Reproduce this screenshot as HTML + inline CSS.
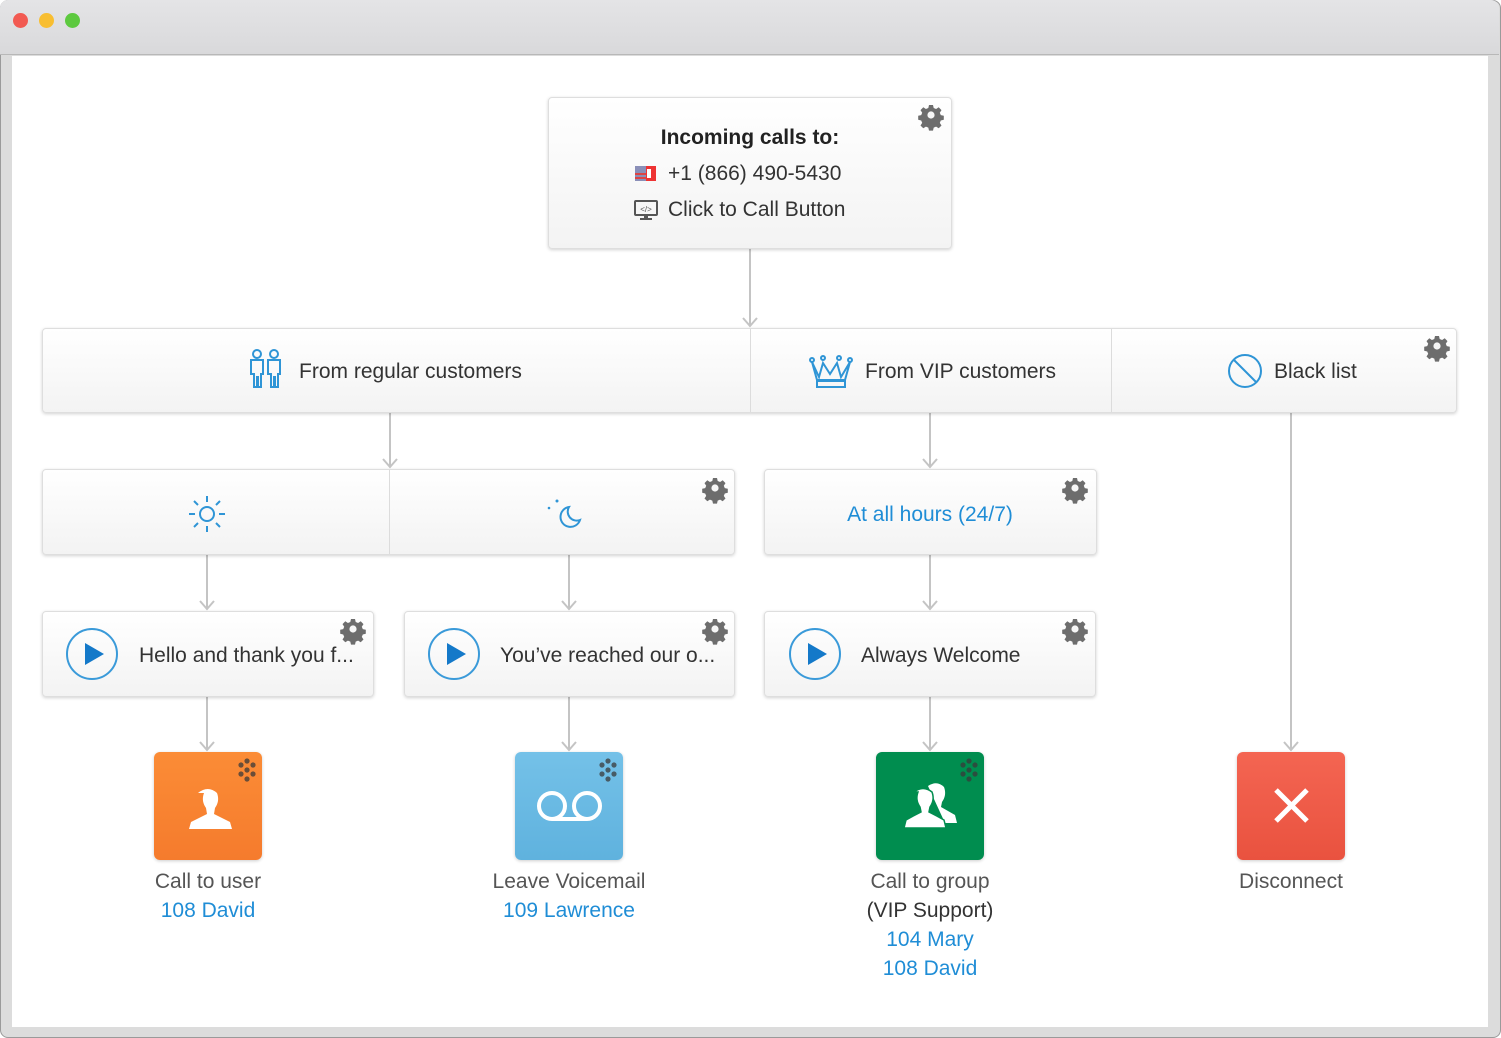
<!DOCTYPE html>
<html><head><style>
*{margin:0;padding:0;box-sizing:border-box}
body{width:1501px;height:1038px;background:#fff;position:relative;overflow:hidden;font-family:"Liberation Sans",sans-serif;color:#333}
.frame{position:absolute;left:0;top:0;width:1501px;height:1038px;border-radius:8px;background:#dcdcdc;border:1px solid #9a9a9a}
.title{position:absolute;left:0;top:0;width:1499px;height:55px;background:linear-gradient(#e4e4e6,#d9d9db);border-bottom:1px solid #b8b8b8;border-radius:8px 8px 0 0}
.dot{position:absolute;top:13px;width:15px;height:15px;border-radius:50%}
.content{position:absolute;left:12px;top:56px;width:1476px;height:971px;background:#fff}
.box{position:absolute;background:linear-gradient(#fff,#f3f3f3);border:1px solid #dedede;border-radius:4px;box-shadow:0 1px 3px rgba(0,0,0,.18)}
.t{position:absolute;font-size:21px;white-space:nowrap;color:#333}
.c{text-align:center;transform:translateX(-50%)}
.vl{position:absolute;width:2px;background:#c4c4c4}
.tile{position:absolute;width:108px;height:108px;border-radius:6px;box-shadow:0 1px 3px rgba(0,0,0,.2)}
.lbl{position:absolute;font-size:21px;transform:translateX(-50%);white-space:nowrap;color:#555}
.lnk{color:#1f8dd6}
.div{position:absolute;width:1px;background:#dcdcdc}
</style></head><body>
<div class="frame"></div>
<div class="title"></div>
<div class="dot" style="left:13px;background:#f25a52"></div>
<div class="dot" style="left:39px;background:#f8be31"></div>
<div class="dot" style="left:65px;background:#5dc93f"></div>
<div class="content"></div>

<svg width="0" height="0" style="position:absolute"><defs>
<g id="gear"><path fill="#6d6d6d" d="M-2,-10h4l.7,3 2.4,1 2.6-1.7 2.8,2.8-1.7,2.6 1,2.4 3,.7v4l-3,.7-1,2.4 1.7,2.6-2.8,2.8-2.6-1.7-2.4,1-.7,3h-4l-.7-3-2.4-1-2.6,1.7-2.8-2.8 1.7-2.6-1-2.4-3-.7v-4l3-.7 1-2.4-1.7-2.6 2.8-2.8 2.6,1.7 2.4-1z"/><circle r="3.6" fill="#f6f6f6"/></g>
<g id="arr"><path d="M-7,-8 L0,0 L7,-8" fill="none" stroke="#c4c4c4" stroke-width="2"/></g>
<g id="play"><circle r="25" fill="none" stroke="#3a9ad9" stroke-width="2"/><path d="M-7,-11 L12,0 L-7,11z" fill="#1479c9"/></g>
<g id="dots" fill="#3a3a3a" opacity=".75"><circle cx="0" cy="-9" r="2.6"/><circle cx="-6" cy="-5" r="2.6"/><circle cx="6" cy="-5" r="2.6"/><circle cx="0" cy="0" r="2.6"/><circle cx="-6" cy="4" r="2.6"/><circle cx="6" cy="4" r="2.6"/><circle cx="0" cy="9" r="2.6"/></g>
</defs></svg>

<div class="vl" style="left:749px;top:248px;height:78px"></div>
<div class="vl" style="left:389px;top:412px;height:55px"></div>
<div class="vl" style="left:929px;top:412px;height:55px"></div>
<div class="vl" style="left:1290px;top:412px;height:337px"></div>
<div class="vl" style="left:206px;top:554px;height:55px"></div>
<div class="vl" style="left:568px;top:554px;height:55px"></div>
<div class="vl" style="left:929px;top:554px;height:55px"></div>
<div class="vl" style="left:206px;top:696px;height:53px"></div>
<div class="vl" style="left:568px;top:696px;height:53px"></div>
<div class="vl" style="left:929px;top:696px;height:53px"></div>
<svg style="position:absolute;left:0;top:0" width="1501" height="1038">
<use href="#arr" x="750" y="326"/><use href="#arr" x="390" y="467"/><use href="#arr" x="930" y="467"/><use href="#arr" x="1291" y="750"/>
<use href="#arr" x="207" y="609"/><use href="#arr" x="569" y="609"/><use href="#arr" x="930" y="609"/>
<use href="#arr" x="207" y="750"/><use href="#arr" x="569" y="750"/><use href="#arr" x="930" y="750"/>
</svg>

<div class="box" style="left:548px;top:97px;width:404px;height:152px"></div>
<div class="t c" style="left:750px;top:126px;font-weight:bold;font-size:21px;color:#222">Incoming calls to:</div>
<div class="t" style="left:668px;top:162px">+1 (866) 490-5430</div>
<div class="t" style="left:668px;top:198px">Click to Call Button</div>
<svg style="position:absolute;left:634px;top:164px" width="24" height="20"><rect x="1" y="2" width="11" height="15" fill="#8a8fb8"/><rect x="1" y="9" width="11" height="2" fill="#d44"/><rect x="1" y="13" width="11" height="2" fill="#d44"/><rect x="12" y="2" width="10" height="15" fill="#e33"/><rect x="13" y="5" width="4" height="9" fill="#fff"/></svg>
<svg style="position:absolute;left:634px;top:199px" width="24" height="22"><rect x="1" y="2" width="22" height="14" rx="1" fill="none" stroke="#555" stroke-width="2"/><text x="12" y="13" font-size="8" text-anchor="middle" fill="#555" font-family="Liberation Sans">&lt;/&gt;</text><rect x="10" y="16" width="4" height="3" fill="#555"/><rect x="6" y="19" width="12" height="2" fill="#555"/></svg>

<div class="box" style="left:42px;top:328px;width:1415px;height:85px"></div>
<div class="div" style="left:750px;top:329px;height:83px"></div>
<div class="div" style="left:1111px;top:329px;height:83px"></div>
<div class="t" style="left:299px;top:360px">From regular customers</div>
<div class="t" style="left:865px;top:360px">From VIP customers</div>
<div class="t" style="left:1274px;top:360px">Black list</div>
<svg style="position:absolute;left:248px;top:348px" width="36" height="42" fill="none" stroke="#2f95d6" stroke-width="2"><circle cx="9" cy="6" r="4"/><circle cx="26" cy="6" r="4"/><path d="M3,12h12v14h-2v13h-3v-10h-1v10h-3v-13h-3z"/><path d="M20,12h12v14h-2v13h-3v-10h-1v10h-3v-13h-3z"/></svg>
<svg style="position:absolute;left:807px;top:350px" width="48" height="40" fill="none" stroke="#2f95d6" stroke-width="2"><path d="M5,12 L12,27 L16,13 L23,24 L30,13 L34,27 L43,12 L38,30 H10Z"/><circle cx="5" cy="10" r="2"/><circle cx="16" cy="8" r="2"/><circle cx="32" cy="8" r="2"/><circle cx="43" cy="10" r="2"/><rect x="10" y="31" width="28" height="6"/></svg>
<svg style="position:absolute;left:1226px;top:352px" width="38" height="38" fill="none" stroke="#2f95d6" stroke-width="2"><circle cx="19" cy="19" r="16"/><path d="M8,8 L30,30"/></svg>

<div class="box" style="left:42px;top:469px;width:693px;height:86px"></div>
<div class="div" style="left:389px;top:470px;height:84px"></div>
<svg style="position:absolute;left:187px;top:494px" width="40" height="40" fill="none" stroke="#2f95d6" stroke-width="2"><circle cx="20" cy="20" r="7"/><path d="M20,2v6M20,32v6M2,20h6M32,20h6M7,7l4,4M29,29l4,4M33,7l-4,4M11,29l-4,4"/></svg>
<svg style="position:absolute;left:544px;top:494px" width="40" height="40"><path d="M25,13 A10,10 0 1 0 36,26 A9,9 0 0 1 25,13Z" fill="none" stroke="#2f95d6" stroke-width="2"/><circle cx="13" cy="7" r="1.5" fill="#2f95d6"/><circle cx="5" cy="14" r="1.3" fill="#2f95d6"/></svg>
<div class="box" style="left:764px;top:469px;width:333px;height:86px"></div>
<div class="t c lnk" style="left:930px;top:503px;color:#1f8dd6">At all hours (24/7)</div>

<div class="box" style="left:42px;top:611px;width:332px;height:86px"></div>
<div class="box" style="left:404px;top:611px;width:331px;height:86px"></div>
<div class="box" style="left:764px;top:611px;width:332px;height:86px"></div>
<div class="t" style="left:139px;top:644px">Hello and thank you f...</div>
<div class="t" style="left:500px;top:644px">You’ve reached our o...</div>
<div class="t" style="left:861px;top:644px">Always Welcome</div>

<svg style="position:absolute;left:0;top:0" width="1501" height="1038">
<use href="#gear" x="931" y="115"/><use href="#gear" x="1437" y="346"/><use href="#gear" x="715" y="488"/><use href="#gear" x="1075" y="488"/>
<use href="#gear" x="353" y="629"/><use href="#gear" x="715" y="629"/><use href="#gear" x="1075" y="629"/>
<use href="#play" x="92" y="654"/><use href="#play" x="454" y="654"/><use href="#play" x="815" y="654"/>
</svg>

<div class="tile" style="left:154px;top:752px;background:linear-gradient(#fb8c36,#f57b2d)"></div>
<div class="tile" style="left:515px;top:752px;background:linear-gradient(#74c1e8,#5fb2de)"></div>
<div class="tile" style="left:876px;top:752px;background:#008d4f"></div>
<div class="tile" style="left:1237px;top:752px;background:linear-gradient(#f46552,#e9523f)"></div>
<svg style="position:absolute;left:0;top:0" width="1501" height="1038">
<use href="#dots" x="247" y="770"/><use href="#dots" x="608" y="770"/><use href="#dots" x="969" y="770"/>
<path fill="#fff" d="M198,793 q10,-8 19,0 q3,8 -2,15 l-1,6 q8,4 16,8 l2,7 h-43 l2,-7 q8,-4 16,-8 l-1,-6 q-5,-7 -2,-15z"/>
<g fill="none" stroke="#fff" stroke-width="4"><circle cx="552" cy="806" r="13"/><circle cx="587" cy="806" r="13"/><path d="M552,819h35"/></g>
<path fill="#fff" d="M928,786 q9,-6 16,1 q3,8 -2,15 l-1,5 q7,4 14,8 l2,8 h-12z"/>
<path fill="#fff" stroke="#008d4f" stroke-width="1.5" d="M914,792 q9,-7 18,0 q3,8 -2,15 l-1,5 q8,4 15,8 l2,8 h-42 l2,-8 q7,-4 15,-8 l-1,-5 q-5,-7 -2,-15z"/>
<path d="M1276,790 L1307,821 M1307,790 L1276,821" stroke="#fff" stroke-width="5"/>
</svg>

<div class="lbl" style="left:208px;top:870px">Call to user</div>
<div class="lbl lnk" style="left:208px;top:899px">108 David</div>
<div class="lbl" style="left:569px;top:870px">Leave Voicemail</div>
<div class="lbl lnk" style="left:569px;top:899px">109 Lawrence</div>
<div class="lbl" style="left:930px;top:870px">Call to group</div>
<div class="lbl" style="left:930px;top:899px;color:#333">(VIP Support)</div>
<div class="lbl lnk" style="left:930px;top:928px">104 Mary</div>
<div class="lbl lnk" style="left:930px;top:957px">108 David</div>
<div class="lbl" style="left:1291px;top:870px">Disconnect</div>
</body></html>
